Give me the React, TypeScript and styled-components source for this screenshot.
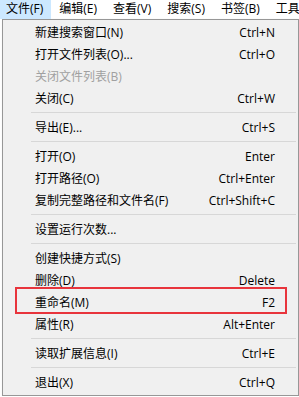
import React from 'react';
import styled, { createGlobalStyle } from 'styled-components';

const GlobalStyle = createGlobalStyle`
    body {
        margin: 0;
        background: #ffffff;
        font-family: "Open Sans", "Noto Sans CJK SC", sans-serif;
        font-size: 12px;
        color: #000000;
    }
`;

const MenuBar = styled.div`
    display: flex;
    gap: 2px;
    height: 19px;
    background: #ffffff;
    white-space: nowrap;
    overflow: hidden;
`;

const MenuTitle = styled.div<{ $active?: boolean }>`
    flex: none;
    padding: 0 8px 0 6px;
    line-height: 18px;
    height: 19px;
    background: ${p => (p.$active ? '#cce8ff' : 'transparent')};
`;

const Dropdown = styled.div`
    margin-left: 2px;
    width: 291px;
    border: 1px solid #979797;
    background: #f0f0f0;
    padding: 1px 2px 2px;
    box-shadow: 2px 2px 3px rgba(0, 0, 0, 0.25);
`;

const Item = styled.div<{ $disabled?: boolean; $marked?: boolean }>`
    position: relative;
    display: grid;
    grid-template-columns: 1fr auto;
    align-items: center;
    height: 22px;
    padding: 0 21px 0 30px;
    color: ${p => (p.$disabled ? '#a0a0a0' : '#000000')};
    white-space: nowrap;

    ${p =>
        p.$marked &&
        `
        &:after {
            content: '';
            position: absolute;
            left: 10px;
            right: 9px;
            top: -4px;
            bottom: -1px;
            border: 2px solid #e8343c;
        }
    `}
`;

const Shortcut = styled.span`
    text-align: right;
`;

const Separator = styled.div`
    height: 7px;
    display: flex;
    align-items: center;
    padding-left: 26px;

    &:before {
        content: '';
        flex: 1;
        height: 1px;
        background: #d7d7d7;
    }
`;

type Entry =
    | { sep: true }
    | { label: string; key?: string; disabled?: boolean; marked?: boolean };

const titles = ['文件(F)', '编辑(E)', '查看(V)', '搜索(S)', '书签(B)', '工具'];

const entries: Entry[] = [
    { label: '新建搜索窗口(N)', key: 'Ctrl+N' },
    { label: '打开文件列表(O)...', key: 'Ctrl+O' },
    { label: '关闭文件列表(B)', disabled: true },
    { label: '关闭(C)', key: 'Ctrl+W' },
    { sep: true },
    { label: '导出(E)...', key: 'Ctrl+S' },
    { sep: true },
    { label: '打开(O)', key: 'Enter' },
    { label: '打开路径(O)', key: 'Ctrl+Enter' },
    { label: '复制完整路径和文件名(F)', key: 'Ctrl+Shift+C' },
    { sep: true },
    { label: '设置运行次数...' },
    { sep: true },
    { label: '创建快捷方式(S)' },
    { label: '删除(D)', key: 'Delete' },
    { label: '重命名(M)', key: 'F2', marked: true },
    { label: '属性(R)', key: 'Alt+Enter' },
    { sep: true },
    { label: '读取扩展信息(I)', key: 'Ctrl+E' },
    { sep: true },
    { label: '退出(X)', key: 'Ctrl+Q' },
];

const App = () => (
    <>
        <GlobalStyle />
        <MenuBar>
            {titles.map((t, i) => (
                <MenuTitle key={t} $active={i === 0}>
                    {t}
                </MenuTitle>
            ))}
        </MenuBar>
        <Dropdown>
            {entries.map((e, i) =>
                'sep' in e ? (
                    <Separator key={i} />
                ) : (
                    <Item key={i} $disabled={e.disabled} $marked={e.marked}>
                        <span>{e.label}</span>
                        <Shortcut>{e.key}</Shortcut>
                    </Item>
                )
            )}
        </Dropdown>
    </>
);

export default App;
